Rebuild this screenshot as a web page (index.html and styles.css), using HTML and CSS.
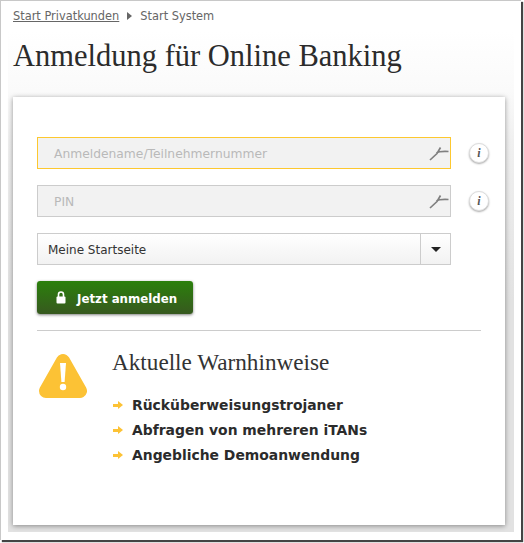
FILE: index.html
```html
<!DOCTYPE html>
<html lang="de">
<head>
    <meta charset="UTF-8">
    <title>Anmeldung für Online Banking</title>
    <link rel="stylesheet" href="styles.css">
</head>
<body>

<div class="frame">
    <div class="page">
        <nav class="crumbs">
            <a href="#">Start Privatkunden</a>
            <span class="crumb-arrow"></span>
            <span>Start System</span>
        </nav>
        <h1>Anmeldung für Online Banking</h1>

        <div class="card">
            <form class="login">
                <div class="row">
                    <div class="field field-active">
                        <span class="placeholder">Anmeldename/Teilnehmernummer</span>
                        <svg class="key" width="20" height="15" viewBox="0 0 20 15"><path d="M1 14 L8 7.5 L11.5 1.5 M7.5 7 Q10 5 19.5 5.5" fill="none" stroke="#808080" stroke-width="1.7"/></svg>
                    </div>
                    <span class="info">i</span>
                </div>
                <div class="row">
                    <div class="field">
                        <span class="placeholder">PIN</span>
                        <svg class="key" width="20" height="15" viewBox="0 0 20 15"><path d="M1 14 L8 7.5 L11.5 1.5 M7.5 7 Q10 5 19.5 5.5" fill="none" stroke="#808080" stroke-width="1.7"/></svg>
                    </div>
                    <span class="info">i</span>
                </div>
                <div class="select">
                    <span class="select-text">Meine Startseite</span>
                    <span class="select-btn"><span class="caret"></span></span>
                </div>
                <button type="button" class="submit">
                    <svg width="10" height="13" viewBox="0 0 10 13"><path d="M2.5 6V3.5a2.5 2.5 0 0 1 5 0V6" fill="none" stroke="#fff" stroke-width="1.6"/><rect x="0.5" y="5.5" width="9" height="7" rx="1" fill="#fff"/></svg>
                    <span class="submit-text">Jetzt anmelden</span>
                </button>
            </form>

            <div class="warnings">
                <svg class="warn-icon" width="50" height="46" viewBox="0 0 50 46">
                    <path d="M25 8 L42 38 H8 Z" fill="#fcc235" stroke="#fcc235" stroke-width="14" stroke-linejoin="round"/>
                    <path d="M22 10 H28 L26.6 29 H23.4 Z" fill="#fff"/>
                    <circle cx="25" cy="34" r="3.2" fill="#fff"/>
                </svg>
                <div class="warn-body">
                    <h2>Aktuelle Warnhinweise</h2>
                    <ul>
                        <li>Rücküberweisungstrojaner</li>
                        <li>Abfragen von mehreren iTANs</li>
                        <li>Angebliche Demoanwendung</li>
                    </ul>
                </div>
            </div>
        </div>
    </div>
</div>

</body>
</html>
```

FILE: styles.css
```css
html, body {
    margin: 0;
    padding: 0;
}
body {
    width: 524px;
    height: 543px;
    overflow: hidden;
    background: #fff;
    font-family: "DejaVu Sans", Verdana, sans-serif;
}
.frame {
    box-sizing: border-box;
    width: 521px;
    height: 540px;
    background: #fff;
    border-top: 1px solid #c8c8c8;
    border-left: 1px solid #c8c8c8;
    box-shadow: 2px 2px 1px #444;
    padding: 0 7px 8px 7px;
}
.page {
    height: 100%;
    box-sizing: border-box;
    padding: 8px 5px 0;
    background: linear-gradient(#fff 30px, #fafafa 90px, #f0f0f0 140px, #e2e2e2 300px);
}
.crumbs {
    display: flex;
    align-items: center;
    font-size: 11.4px;
    line-height: 14px;
    color: #666;
}
.crumbs a {
    color: #666;
}
.crumb-arrow {
    width: 0;
    height: 0;
    margin: 0 8px 0 8px;
    border-left: 5px solid #666;
    border-top: 4px solid transparent;
    border-bottom: 4px solid transparent;
}
h1 {
    margin: 15px 0 23px;
    font-family: "Liberation Serif", Georgia, serif;
    font-size: 30.5px;
    line-height: 36px;
    font-weight: normal;
    color: #2b2b2b;
}
.card {
    box-sizing: border-box;
    width: 492px;
    height: 428px;
    padding: 40px 24px 0;
    background: #fff;
    box-shadow: 0 1px 5px rgba(0, 0, 0, 0.4);
}
.row {
    display: flex;
    align-items: center;
    margin-bottom: 16px;
}
.field {
    flex: none;
    box-sizing: border-box;
    display: flex;
    align-items: center;
    justify-content: space-between;
    width: 414px;
    height: 32px;
    padding: 0 1px 0 16px;
    background: #f2f2f2;
    border: 1px solid #ccc;
}
.field-active {
    border-color: #fdc82f;
}
.placeholder {
    margin-top: 2px;
    font-size: 12.3px;
    color: #b9b9b9;
}
.info {
    flex: none;
    box-sizing: border-box;
    width: 20px;
    height: 20px;
    margin-left: 18px;
    border-radius: 50%;
    border: 1px solid #ddd;
    background: #fff;
    box-shadow: 0 1px 2px rgba(0, 0, 0, 0.35);
    text-align: center;
    font: italic bold 12px/18px "Liberation Serif", serif;
    color: #555;
}
.select {
    box-sizing: border-box;
    display: flex;
    width: 414px;
    height: 32px;
    background: linear-gradient(#fff, #f2f2f2);
    border: 1px solid #ccc;
}
.select-text {
    flex: 1;
    padding-left: 10px;
    font-size: 12px;
    line-height: 32px;
    color: #333;
}
.select-btn {
    display: flex;
    align-items: center;
    justify-content: center;
    width: 29px;
    border-left: 1px solid #ccc;
}
.caret {
    width: 0;
    height: 0;
    border-top: 5px solid #222;
    border-left: 5px solid transparent;
    border-right: 5px solid transparent;
}
.submit {
    display: flex;
    align-items: center;
    gap: 11px;
    box-sizing: border-box;
    width: 156px;
    height: 33px;
    margin-top: 16px;
    padding: 0 0 0 19px;
    border: 0;
    border-radius: 3px;
    background: linear-gradient(#2b800c, #37591f);
    box-shadow: 0 1px 3px rgba(0, 0, 0, 0.5);
    font-family: "DejaVu Sans", Verdana, sans-serif;
    font-size: 11.8px;
    font-weight: bold;
    color: #fff;
}
.submit-text {
    margin-top: 2px;
}
.warnings {
    display: flex;
    width: 444px;
    margin-top: 16px;
    padding-top: 17px;
    border-top: 1px solid #ccc;
}
.warn-icon {
    margin: 5px 0 0 1px;
}
.warn-body {
    margin-left: 24px;
}
h2 {
    margin: 0 0 20px;
    font-family: "Liberation Serif", Georgia, serif;
    font-size: 23.2px;
    line-height: 28px;
    font-weight: normal;
    color: #333;
}
ul {
    margin: 0;
    padding: 0;
    list-style: none;
}
li {
    position: relative;
    padding-left: 20px;
    margin-bottom: 7px;
    font-size: 13.9px;
    line-height: 18px;
    font-weight: bold;
    color: #2b2b2b;
}
li::before {
    content: "";
    position: absolute;
    left: 1px;
    top: 8px;
    width: 6px;
    height: 3px;
    background: #fcc235;
}
li::after {
    content: "";
    position: absolute;
    left: 6px;
    top: 5px;
    border-left: 5px solid #fcc235;
    border-top: 4.5px solid transparent;
    border-bottom: 4.5px solid transparent;
}
```
